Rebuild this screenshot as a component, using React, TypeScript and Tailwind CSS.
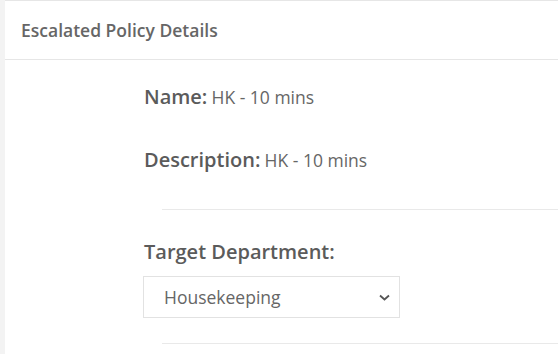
export default function App() {
  return (
    <div className="flex h-[354px] w-[558px] overflow-hidden bg-[#f3f3f3] font-['Open_Sans',sans-serif]">
      <div className="ml-[5px] flex-1 border-t border-[#e6e6e6] bg-white">
        <div className="flex h-[59px] items-center border-b border-[#e6e6e6] pl-4">
          <h2 className="text-[17.5px] font-semibold text-[#666]">Escalated Policy Details</h2>
        </div>
        <div className="pl-[139px]">
          <div className="pt-[23px]">
            <p className="leading-[28px] text-[#5b5b5b]">
              <span className="text-[20px] font-semibold">Name:</span>{' '}
              <span className="text-[17.5px] text-[#666]">HK - 10 mins</span>
            </p>
          </div>
          <div className="pt-[34px]">
            <p className="leading-[28px] text-[#5b5b5b]">
              <span className="text-[20px] font-semibold">Description:</span>{' '}
              <span className="text-[17.5px] text-[#666]">HK - 10 mins</span>
            </p>
          </div>
          <div className="ml-[18px] mt-[34px] border-t border-[#e9e9e9]" />
          <div className="pt-[28px]">
            <p className="text-[20px] leading-[28px] font-semibold text-[#5b5b5b]">Target Department:</p>
            <div className="ml-[-1px] mt-[10px] flex h-[42px] w-[257px] items-center justify-between border border-[#e2e2e2] pl-5 pr-[9px]">
              <span className="text-[17.5px] text-[#666]">Housekeeping</span>
              <svg width="11" height="7" viewBox="0 0 11 7" fill="none">
                <path d="M1 1.5l4.5 4 4.5-4" stroke="#555" strokeWidth="1.8" />
              </svg>
            </div>
          </div>
          <div className="ml-[18px] mt-[25px] border-t border-[#e9e9e9]" />
        </div>
      </div>
    </div>
  )
}
